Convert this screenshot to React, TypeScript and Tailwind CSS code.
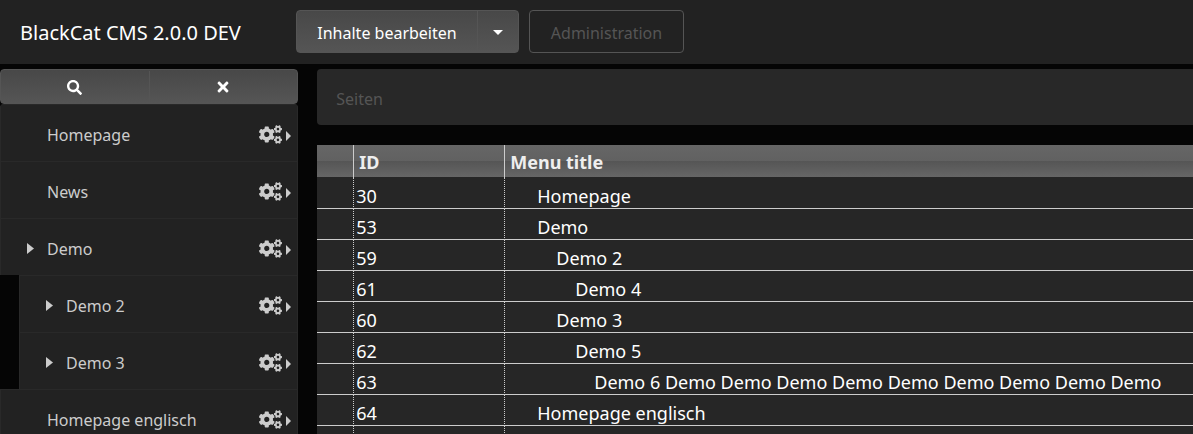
import React from 'react';
import { FaCogs, FaSearch, FaTimes } from 'react-icons/fa';

interface TreeNode {
  title: string;
  expandable?: boolean;
  children?: TreeNode[];
}

interface PageRow {
  id: number;
  title: string;
  level: number;
}

const tree: TreeNode[] = [
  { title: 'Homepage' },
  { title: 'News' },
  {
    title: 'Demo',
    expandable: true,
    children: [
      { title: 'Demo 2', expandable: true },
      { title: 'Demo 3', expandable: true },
    ],
  },
  { title: 'Homepage englisch' },
];

const pages: PageRow[] = [
  { id: 30, title: 'Homepage', level: 0 },
  { id: 53, title: 'Demo', level: 0 },
  { id: 59, title: 'Demo 2', level: 1 },
  { id: 61, title: 'Demo 4', level: 2 },
  { id: 60, title: 'Demo 3', level: 1 },
  { id: 62, title: 'Demo 5', level: 2 },
  { id: 63, title: 'Demo 6 Demo Demo Demo Demo Demo Demo Demo Demo Demo', level: 3 },
  { id: 64, title: 'Homepage englisch', level: 0 },
];

const indent = ['pl-8', 'pl-[51px]', 'pl-[70px]', 'pl-[89px]'];

const CaretRight = ({ className }: { className: string }) => (
  <svg viewBox="0 0 6 10" preserveAspectRatio="none" fill="currentColor" className={className} aria-hidden="true">
    <path d="M0 0L6 5L0 10Z" />
  </svg>
);

const TreeItem = ({ node }: { node: TreeNode }) => (
  <li>
    <div className="flex h-[57px] items-center border border-b-0 border-[#292929] bg-[#222] pl-[26px] pr-[6px] pt-[2px] text-[#ccc]">
      {node.expandable ? (
        <button type="button" aria-label={`${node.title} aufklappen`} className="w-5 shrink-0">
          <CaretRight className="h-[11px] w-[7px]" />
        </button>
      ) : (
        <span className="w-5 shrink-0" />
      )}
      <a href="#" className="flex-1 truncate pt-px">{node.title}</a>
      <button type="button" aria-label={`${node.title} Optionen`} className="flex items-center gap-1">
        <FaCogs className="h-[19px] w-[23px]" />
        <CaretRight className="mt-[3px] h-[10px] w-[5px]" />
      </button>
    </div>
    {node.children && (
      <ul className="pl-[19px]">
        {node.children.map((child) => (
          <TreeItem key={child.title} node={child} />
        ))}
      </ul>
    )}
  </li>
);

const App = () => {
  return (
    <div className="flex h-screen flex-col overflow-hidden bg-[#050505] font-['Noto_Sans','Segoe_UI',sans-serif] text-base leading-6 text-white">
      <header className="flex shrink-0 items-center bg-[#222] pt-[10px] pb-[11px] pl-5">
        <h1 className="w-[276px] pt-[2px] text-xl">BlackCat CMS 2.0.0 DEV</h1>
        <div className="flex h-[43px] rounded border border-[#555] bg-linear-to-b from-[#484848] to-[#555]">
          <button type="button" className="w-[181px] border-r border-[#555] pt-[2px]">Inhalte bearbeiten</button>
          <button type="button" aria-label="Menü öffnen" className="flex w-10 items-center justify-center pt-px">
            <svg viewBox="0 0 10 5" fill="currentColor" className="h-[5px] w-[10px]" aria-hidden="true">
              <path d="M0 0H10L5 5Z" />
            </svg>
          </button>
        </div>
        <button type="button" className="ml-[10px] h-[43px] w-[155px] rounded border border-[#555] pt-[2px] text-[#555]">
          Administration
        </button>
      </header>

      <div className="flex min-h-0 flex-1 pt-[5px]">
        <aside className="w-1/4 shrink-0">
          <div className="flex h-[35px] rounded border border-[#555] bg-linear-to-b from-[#484848] to-[#555] pt-px">
            <button type="button" aria-label="Suchen" className="flex flex-1 items-center justify-center border-r border-[#555]">
              <FaSearch className="size-[15px]" />
            </button>
            <button type="button" aria-label="Schließen" className="flex flex-1 items-center justify-center">
              <FaTimes className="size-4" />
            </button>
          </div>
          <ul className="overflow-hidden rounded-t">
            {tree.map((node) => (
              <TreeItem key={node.title} node={node} />
            ))}
          </ul>
        </aside>

        <main className="min-w-0 flex-1 pl-[19px]">
          <nav aria-label="Breadcrumb" className="mb-5 flex h-14 items-center rounded-l bg-[#282828] px-[19px] pt-1 text-[#555]">
            Seiten
          </nav>
          <table className="w-full table-fixed border-separate border-spacing-0 bg-[#262626] text-left text-lg/6">
            <thead>
              <tr className="h-8 bg-[linear-gradient(#666,#616161_50%,#555_50%,#666)] text-[#eee]">
                <th className="w-9 p-0" aria-label="Auswahl" />
                <th className="w-[151px] border-l border-[#ccc] py-0 pl-[5px] pt-[2px]">ID</th>
                <th className="border-l border-[#ccc] py-0 pl-[5px] pt-[2px]">Menu title</th>
              </tr>
            </thead>
            <tbody>
              {pages.map((page) => (
                <tr key={page.id} className="h-[31px] first:h-8">
                  <td className="border-b border-[#ccc] p-0" />
                  <td className="border-b border-l border-[#ccc] p-0 pl-[2px] pt-[6px] [border-left-style:dotted]">{page.id}</td>
                  <td className={`truncate border-b border-l border-[#ccc] p-0 pt-[6px] [border-left-style:dotted] ${indent[page.level]}`}>
                    {page.title}
                  </td>
                </tr>
              ))}
              <tr className="h-[31px]">
                <td className="p-0" />
                <td className="border-l border-dotted border-[#ccc] p-0" />
                <td className="border-l border-dotted border-[#ccc] p-0" />
              </tr>
            </tbody>
          </table>
        </main>
      </div>
    </div>
  );
};

export default App;
